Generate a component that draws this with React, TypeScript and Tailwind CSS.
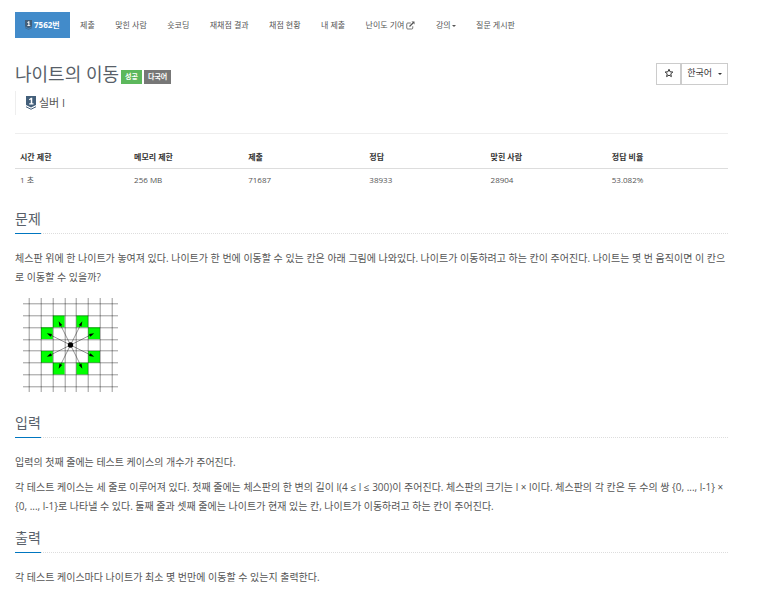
import React from "react";

interface NavItem {
  label: string;
  icon?: "external" | "caret";
}

const navItems: NavItem[] = [
  { label: "제출" },
  { label: "맞힌 사람" },
  { label: "숏코딩" },
  { label: "재채점 결과" },
  { label: "채점 현황" },
  { label: "내 제출" },
  { label: "난이도 기여", icon: "external" },
  { label: "강의", icon: "caret" },
  { label: "질문 게시판" },
];

const stats = [
  { label: "시간 제한", value: "1 초", width: "w-[16%]" },
  { label: "메모리 제한", value: "256 MB", width: "w-[16%]" },
  { label: "제출", value: "71687", width: "w-[17%]" },
  { label: "정답", value: "38933", width: "w-[17%]" },
  { label: "맞힌 사람", value: "28904", width: "w-[17%]" },
  { label: "정답 비율", value: "53.082%", width: "w-[17%]" },
];

// Cells the knight can reach, as offsets from the centre
const moves = [
  [-1, -2],
  [1, -2],
  [-2, -1],
  [2, -1],
  [-2, 1],
  [2, 1],
  [-1, 2],
  [1, 2],
];

const gridLines = [6, 18, 30, 42, 53, 65, 77, 89];

function TierIcon({ className }: { className: string }) {
  return (
    <svg viewBox="0 0 20 28" className={className} aria-hidden="true">
      <path d="M0 0h20v18l-10 5-10-5z" fill="#435f7a" />
      <path d="M0 21.500l10 5 10-5" fill="none" stroke="#435f7a" strokeWidth="2" />
      <path d="M6 6.500l4-3h2.500v11h2.500v2.500h-8.500v-2.500h3v-7.500l-3 1.500z" fill="#fff" />
    </svg>
  );
}

function ExternalIcon() {
  return (
    <svg viewBox="0 0 18 18" className="ml-px size-[9px]" fill="none" stroke="currentColor" aria-hidden="true">
      <path d="M9.500 4H3.500Q1.500 4 1.500 6v8q0 2 2 2h8q2 0 2-2v-3.500" strokeWidth="1.6" />
      <path d="M7 11l7-7" strokeWidth="2.4" />
      <path d="M11 1h6v6z" fill="currentColor" stroke="none" />
    </svg>
  );
}

function StarIcon() {
  return (
    <svg viewBox="0 0 20 20" className="mb-[2px] size-[10px]" fill="none" stroke="currentColor" aria-hidden="true">
      <path
        d="M10 2.500l2.200 5.100 5.500.500-4.200 3.600 1.300 5.500-4.800-2.900-4.800 2.900 1.300-5.500-4.200-3.600 5.500-.500z"
        strokeWidth="2"
      />
    </svg>
  );
}

function Caret() {
  return (
    <svg viewBox="0 0 6 3" className="mt-[2px] h-[2px] w-1" fill="currentColor" aria-hidden="true">
      <path d="M0 0h6l-3 3z" />
    </svg>
  );
}

function KnightMoves() {
  return (
    <svg viewBox="0 0 96 95" className="h-[95px] w-[96px]" role="img" aria-label="나이트의 이동">
      {moves.map(([dx, dy]) => (
        <rect
          key={`${dx},${dy}`}
          x={47.5 + dx * 11.8 - 5.9}
          y={47 + dy * 11.8 - 5.9}
          width="11.8"
          height="11.8"
          fill="#00ff00"
        />
      ))}
      {gridLines.map((p) => (
        <g key={p} stroke="#000" strokeOpacity="0.4" strokeWidth="1">
          <path d={`M${p + 0.2} 0v94`} />
          <path d={`M0 ${p - 0.2}h95`} />
        </g>
      ))}
      {moves.map(([dx, dy]) => {
        const angle = (Math.atan2(dy, dx) * 180) / Math.PI;
        return (
          <g key={`${dx},${dy}`} transform={`translate(47.5 47) rotate(${angle})`}>
            <path d="M0 0h24" stroke="#000" strokeOpacity="0.6" strokeWidth="0.6" />
            <path d="M26.500 0l-5-1.500v3z" fill="#000" />
          </g>
        );
      })}
      <circle cx="47.5" cy="47" r="2.7" fill="#000" />
    </svg>
  );
}

function Section({ title, children }: { title: string; children: React.ReactNode }) {
  return (
    <section>
      <div className="flex border-b border-dotted border-[#ddd]">
        <h2 className="-mb-px border-b border-[#0076c0] pb-1 text-[14px] leading-5 text-[#585f69]">
          {title}
        </h2>
      </div>
      <div className="space-y-[6px] pt-[15px] pb-3 text-[10px] leading-[19px]">{children}</div>
    </section>
  );
}

export default function App() {
  return (
    <div
      lang="ko"
      className="min-h-screen bg-white pt-3 pr-9 pl-[15px] font-['Open_Sans','Noto_Sans_CJK_KR',sans-serif] text-[8px] text-[#555]"
    >
      <nav className="flex h-[26px] max-w-[510px] justify-between leading-[26px] whitespace-nowrap">
        <a href="#problem" className="flex items-center bg-[#428bca] px-[10px] font-bold text-white">
          <TierIcon className="mr-[2px] h-[10px] w-[7px]" />
          7562번
        </a>
        {navItems.map((item) => (
          <a key={item.label} href="#" className="flex items-center gap-px px-[10px]">
            {item.label}
            {item.icon === "external" && <ExternalIcon />}
            {item.icon === "caret" && <Caret />}
          </a>
        ))}
      </nav>

      <header className="flex items-start justify-between border-b border-[#eee] pt-6 pb-[18px]">
        <div>
          <div className="flex items-end">
            <h1 className="mr-[2px] text-[18px] leading-6 text-[#585f69]">나이트의 이동</h1>
            <div className="flex gap-[2px] pb-[2px] text-[7px] leading-[14px] font-bold text-white">
              <span className="bg-[#5cb85c] px-1">성공</span>
              <span className="bg-[#777] px-1">다국어</span>
            </div>
          </div>
          <div className="mt-[5px] flex h-6 items-center gap-[3px] border-l border-[#eee] pl-[10px] text-[11px]">
            <TierIcon className="h-[14px] w-[10px]" />
            실버 I
          </div>
        </div>
        <div className="mt-px flex h-[22px] text-[#333]">
          <button
            type="button"
            aria-label="즐겨찾기"
            className="flex w-[25px] items-center justify-center border border-[#ccc]"
          >
            <StarIcon />
          </button>
          <button
            type="button"
            className="flex items-center gap-[6px] border border-[#ccc] px-[5px] pb-[2px] text-[9px]"
          >
            한국어
            <Caret />
          </button>
        </div>
      </header>

      <table className="mt-[14px] mb-[18px] w-full table-fixed text-left leading-[14px]">
        <thead>
          <tr className="border-b border-[#ddd] text-[#333]">
            {stats.map((s) => (
              <th key={s.label} className={`${s.width} px-[5px] pt-[2px] pb-1 font-bold`}>
                {s.label}
              </th>
            ))}
          </tr>
        </thead>
        <tbody>
          <tr>
            {stats.map((s) => (
              <td key={s.label} className="px-[5px] py-1">
                {s.value}
              </td>
            ))}
          </tr>
        </tbody>
      </table>

      <main id="problem">
        <Section title="문제">
          <p>
            체스판 위에 한 나이트가 놓여져 있다. 나이트가 한 번에 이동할 수 있는 칸은 아래 그림에 나와있다.
            나이트가 이동하려고 하는 칸이 주어진다. 나이트는 몇 번 움직이면 이 칸으로 이동할 수 있을까?
          </p>
          <div className="px-2 pt-[5px] pb-2">
            <KnightMoves />
          </div>
        </Section>
        <Section title="입력">
          <p>입력의 첫째 줄에는 테스트 케이스의 개수가 주어진다.</p>
          <p>
            각 테스트 케이스는 세 줄로 이루어져 있다. 첫째 줄에는 체스판의 한 변의 길이 l(4 ≤ l ≤ 300)이
            주어진다. 체스판의 크기는 l × l이다. 체스판의 각 칸은 두 수의 쌍 {"{0, ..., l-1}"} ×{" "}
            {"{0, ..., l-1}"}로 나타낼 수 있다. 둘째 줄과 셋째 줄에는 나이트가 현재 있는 칸, 나이트가
            이동하려고 하는 칸이 주어진다.
          </p>
        </Section>
        <Section title="출력">
          <p>각 테스트 케이스마다 나이트가 최소 몇 번만에 이동할 수 있는지 출력한다.</p>
        </Section>
      </main>
    </div>
  );
}
